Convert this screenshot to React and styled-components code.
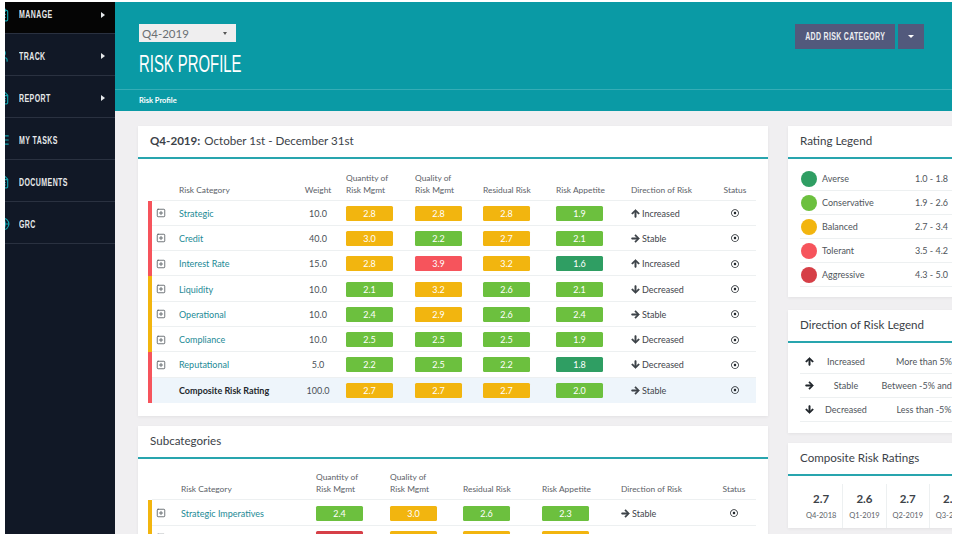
import React from 'react';
import styled, { createGlobalStyle } from 'styled-components';
import { ClipboardList, FileText, Globe, ListChecks, SquarePlus, User } from 'lucide-react';
import { FaArrowDown, FaArrowRight, FaArrowUp, FaRegDotCircle } from 'react-icons/fa';

const GlobalStyle = createGlobalStyle`
  html, body {
    margin: 0;
    background: #fff;
    font-family: Lato, "Open Sans", sans-serif;
    color: #3c4248;
  }
`;

const tones = {
  averse: '#2f9e63',
  conservative: '#6cc03e',
  balanced: '#f2b50f',
  tolerant: '#f6545c',
  aggressive: '#d63f47',
};

const toneFor = value => {
  if (value <= 1.8) return 'averse';
  if (value <= 2.6) return 'conservative';
  if (value <= 3.4) return 'balanced';
  if (value <= 4.2) return 'tolerant';
  return 'aggressive';
};

const Page = styled.div`
  width: 947px;
  height: 532px;
  margin: 2px 8px 2px 5px;
  display: flex;
  overflow: hidden;
`;

const Sidebar = styled.nav`
  width: 110px;
  flex: none;
  background: #111826;
  overflow: hidden;
`;

const NavItem = styled.div`
  height: ${p => (p.$first ? '32px' : '42px')};
  display: flex;
  align-items: center;
  border-bottom: 1px solid #2a3140;
  background: ${p => (p.$active ? '#050505' : 'transparent')};
  box-sizing: border-box;
  padding-right: 10px;
  padding-top: ${p => (p.$first ? 0 : '3px')};
  padding-bottom: ${p => (p.$first ? '6px' : 0)};
  color: #e6e8ea;
`;

const NavIcon = styled.span`
  display: flex;
  width: 14px;
  margin-left: -9px;
  margin-right: 9px;
  color: #12a0ab;
`;

const NavLabel = styled.span`
  flex: 1;
  font-family: "Liberation Sans", sans-serif;
  font-size: 10px;
  font-weight: 700;
  letter-spacing: 0.6px;
  transform: scaleX(0.7);
  transform-origin: left center;
`;

const NavCaret = styled.span`
  width: 0;
  height: 0;
  border-left: 4px solid #e6e8ea;
  border-top: 3.5px solid transparent;
  border-bottom: 3.5px solid transparent;
`;

const Content = styled.div`
  flex: 1;
  min-width: 0;
  display: flex;
  flex-direction: column;
  background: #f0eff1;
`;

const Header = styled.header`
  height: 109px;
  flex: none;
  background: #0a9aa5;
  display: flex;
  flex-direction: column;
  color: #fff;
`;

const HeaderTop = styled.div`
  height: 88px;
  flex: none;
  box-sizing: border-box;
  padding: 22px 28px 0 24px;
  display: flex;
  justify-content: space-between;
  align-items: flex-start;
  border-bottom: 1px solid #35adb6;
`;

const Select = styled.div`
  width: 97px;
  height: 18px;
  box-sizing: border-box;
  padding: 0 6px 0 3px;
  background: #efeeef;
  color: #6a6f73;
  font-size: 11.5px;
  display: flex;
  align-items: center;
  justify-content: space-between;
`;

const SelectCaret = styled.span`
  width: 0;
  height: 0;
  border-top: 3px solid #555;
  border-left: 2.5px solid transparent;
  border-right: 2.5px solid transparent;
  margin-right: 3px;
`;

const PageTitle = styled.h1`
  margin: 9px 0 0;
  font-family: "Liberation Sans", sans-serif;
  font-size: 24px;
  line-height: 26px;
  font-weight: 400;
  white-space: nowrap;
  transform: scaleX(0.62);
  transform-origin: left center;
`;

const ButtonGroup = styled.div`
  display: flex;
  gap: 3px;
`;

const ActionButton = styled.div`
  width: ${p => (p.$icon ? '26px' : '100px')};
  height: 25px;
  display: flex;
  align-items: center;
  justify-content: center;
  background: #52597c;
  color: #eceef2;
`;

const ActionLabel = styled.span`
  flex: none;
  white-space: nowrap;
  font-family: "Liberation Sans", sans-serif;
  font-size: 10px;
  font-weight: 700;
  letter-spacing: 0.45px;
  transform: scaleX(0.7);
`;

const ActionCaret = styled.span`
  width: 0;
  height: 0;
  border-top: 3px solid #fff;
  border-left: 3px solid transparent;
  border-right: 3px solid transparent;
`;

const Breadcrumb = styled.div`
  flex: 1;
  padding-left: 24px;
  display: flex;
  align-items: center;
  font-size: 7.5px;
  font-weight: 700;
`;

const Body = styled.main`
  flex: 1;
  min-height: 0;
  display: flex;
  gap: 20px;
  padding: 15px 0 0 23px;
`;

const MainColumn = styled.div`
  width: 630px;
  flex: none;
  display: flex;
  flex-direction: column;
  gap: 10px;
`;

const SideColumn = styled.div`
  width: 190px;
  flex: none;
  display: flex;
  flex-direction: column;
`;

const Card = styled.section`
  background: #fff;
  box-shadow: 0 1px 3px rgba(0, 0, 0, 0.06);
  margin-bottom: ${p => p.$gap || 0}px;
`;

const CardTitle = styled.h2`
  height: 33px;
  margin: 0;
  box-sizing: border-box;
  padding: 0 0 2px 12px;
  display: flex;
  align-items: center;
  gap: 4px;
  font-size: 11.6px;
  font-weight: 400;
  color: #3c4248;
  border-bottom: 2px solid #28a5ae;
`;

const Strong = styled.strong`
  font-weight: 700;
`;

const TableWrap = styled.div`
  padding: 11px 12px 13px 10px;
`;

const Row = styled.div`
  display: grid;
  grid-template-columns: ${p => p.$columns};
  height: ${p => (p.$head ? '30.5px' : '25.3px')};
  box-sizing: border-box;
  align-items: ${p => (p.$head ? 'end' : 'center')};
  border-left: 4px solid ${p => p.$bar || 'transparent'};
  box-shadow: ${p => (p.$total ? 'none' : 'inset 0 -1px 0 #edf0f1')};
  background: ${p => (p.$total ? '#eef5fb' : 'transparent')};
  font-size: 9px;
  color: #4a5056;
`;

const HeadCell = styled.div`
  padding-left: ${p => (p.$flush ? 0 : 6)}px;
  padding-bottom: 5px;
  font-size: 8.4px;
  line-height: 12px;
  color: #5c6268;
  text-align: ${p => p.$align || 'left'};
`;

const Expand = styled.span`
  display: flex;
  padding-left: 4px;
  color: #555b60;
`;

const CategoryLink = styled.span`
  font-size: 9px;
  color: ${p => (p.$total ? '#23282d' : '#1d8a96')};
  font-weight: ${p => (p.$total ? 700 : 400)};
`;

const Weight = styled.span`
  text-align: center;
  font-size: 9px;
`;

const BadgeCell = styled.div`
  padding-left: 6px;
`;

const Badge = styled.div`
  width: 47px;
  height: 15px;
  border-radius: 1.5px;
  background: ${p => tones[p.$tone]};
  color: #fff;
  font-size: 9px;
  line-height: 15px;
  text-align: center;
`;

const Direction = styled.div`
  padding-left: 6px;
  display: flex;
  align-items: center;
  gap: 2px;
  font-size: 9px;
  color: #3f454b;
`;

const Status = styled.div`
  display: flex;
  justify-content: center;
  color: #23282d;
`;

const LegendBody = styled.div`
  padding: ${p => p.$top}px 0 ${p => 18 - p.$top}px 12px;
`;

const LegendRow = styled.div`
  height: 24px;
  display: flex;
  align-items: center;
  box-sizing: border-box;
  border-bottom: 1px solid #edf0f1;
  font-size: 9px;
  color: #4f555b;
`;

const Dot = styled.span`
  width: 16px;
  height: 16px;
  margin-left: 1px;
  margin-right: 5px;
  border-radius: 50%;
  background: ${p => tones[p.$tone]};
`;

const LegendName = styled.span`
  width: 93px;
`;

const DirectionRow = styled(LegendRow)`
  display: grid;
  grid-template-columns: 18px 56px 100px;
  text-align: center;
`;

const DirectionArrow = styled.span`
  display: flex;
  justify-content: center;
  color: #23282d;
`;

const RatingStrip = styled.div`
  display: flex;
  padding: 8px 0 0 12px;
`;

const RatingCell = styled.div`
  width: 43.3px;
  flex: none;
  box-sizing: border-box;
  padding: 7px 0 8px;
  border-right: 1px solid #edf0f1;
  text-align: center;
`;

const RatingValue = styled.div`
  font-size: 11.5px;
  line-height: 16px;
  font-weight: 700;
  color: #3c4248;
`;

const RatingLabel = styled.div`
  margin-top: 4px;
  font-size: 7.5px;
  color: #5c6268;
`;

const navItems = [
  { label: 'MANAGE', Icon: ClipboardList, caret: true, active: true },
  { label: 'TRACK', Icon: User, caret: true },
  { label: 'REPORT', Icon: FileText, caret: true },
  { label: 'MY TASKS', Icon: ListChecks },
  { label: 'DOCUMENTS', Icon: FileText },
  { label: 'GRC', Icon: Globe },
];

const directions = {
  up: { Icon: FaArrowUp, label: 'Increased' },
  flat: { Icon: FaArrowRight, label: 'Stable' },
  down: { Icon: FaArrowDown, label: 'Decreased' },
};

const RED = tones.tolerant;
const YELLOW = tones.balanced;

const riskRows = [
  { name: 'Strategic', weight: '10.0', scores: [2.8, 2.8, 2.8, 1.9], dir: 'up', bar: RED },
  { name: 'Credit', weight: '40.0', scores: [3.0, 2.2, 2.7, 2.1], dir: 'flat', bar: RED },
  { name: 'Interest Rate', weight: '15.0', scores: [2.8, 3.9, 3.2, 1.6], dir: 'up', bar: RED },
  { name: 'Liquidity', weight: '10.0', scores: [2.1, 3.2, 2.6, 2.1], dir: 'down', bar: YELLOW },
  { name: 'Operational', weight: '10.0', scores: [2.4, 2.9, 2.6, 2.4], dir: 'flat', bar: YELLOW },
  { name: 'Compliance', weight: '10.0', scores: [2.5, 2.5, 2.5, 1.9], dir: 'down', bar: YELLOW },
  { name: 'Reputational', weight: '5.0', scores: [2.2, 2.5, 2.2, 1.8], dir: 'down', bar: RED },
  { name: 'Composite Risk Rating', weight: '100.0', scores: [2.7, 2.7, 2.7, 2.0], dir: 'flat', bar: RED, total: true },
];

const subRows = [
  { name: 'Strategic Imperatives', scores: [2.4, 3.0, 2.6, 2.3], dir: 'flat', bar: YELLOW },
  { name: 'Financial Position', scores: [4.3, 3.0, 3.0, 3.0], dir: 'flat', bar: YELLOW },
];

const ratingLegend = [
  { name: 'Averse', range: '1.0 - 1.8', tone: 'averse' },
  { name: 'Conservative', range: '1.9 - 2.6', tone: 'conservative' },
  { name: 'Balanced', range: '2.7 - 3.4', tone: 'balanced' },
  { name: 'Tolerant', range: '3.5 - 4.2', tone: 'tolerant' },
  { name: 'Aggressive', range: '4.3 - 5.0', tone: 'aggressive' },
];

const directionLegend = [
  { dir: 'up', text: 'More than 5%' },
  { dir: 'flat', text: 'Between -5% and 5%' },
  { dir: 'down', text: 'Less than -5%' },
];

const ratings = [
  { value: '2.7', label: 'Q4-2018' },
  { value: '2.6', label: 'Q1-2019' },
  { value: '2.7', label: 'Q2-2019' },
  { value: '2.7', label: 'Q3-2019' },
];

const riskColumns = '27px 117px 44px 69px 68px 73px 75px 89px 42px';
const subColumns = '29px 129px 74px 73px 79px 79px 97px 44px';

const RiskRow = ({ row, columns }) => {
  const { Icon, label } = directions[row.dir];
  return (
    <Row $columns={columns} $bar={row.bar} $total={row.total}>
      <Expand>{!row.total && <SquarePlus size={10} strokeWidth={2} />}</Expand>
      <CategoryLink $total={row.total}>{row.name}</CategoryLink>
      {row.weight && <Weight>{row.weight}</Weight>}
      {row.scores.map((score, index) => (
        <BadgeCell key={index}>
          <Badge $tone={toneFor(score)}>{score.toFixed(1)}</Badge>
        </BadgeCell>
      ))}
      <Direction>
        <Icon size={9} stroke="currentColor" strokeWidth={30} />
        {label}
      </Direction>
      <Status>
        <FaRegDotCircle size={8} />
      </Status>
    </Row>
  );
};

const TableHead = ({ columns, weight }) => (
  <Row $head $columns={columns}>
    <span />
    <HeadCell $flush>Risk Category</HeadCell>
    {weight && <HeadCell $flush $align="center">Weight</HeadCell>}
    <HeadCell>Quantity of<br />Risk Mgmt</HeadCell>
    <HeadCell>Quality of<br />Risk Mgmt</HeadCell>
    <HeadCell>Residual Risk</HeadCell>
    <HeadCell>Risk Appetite</HeadCell>
    <HeadCell>Direction of Risk</HeadCell>
    <HeadCell $flush $align="center">Status</HeadCell>
  </Row>
);

const App = () => (
  <>
    <GlobalStyle />
    <Page>
      <Sidebar>
        {navItems.map(({ label, Icon, caret, active }, index) => (
          <NavItem key={label} $active={active} $first={index === 0}>
            <NavIcon><Icon size={14} /></NavIcon>
            <NavLabel>{label}</NavLabel>
            {caret && <NavCaret />}
          </NavItem>
        ))}
      </Sidebar>
      <Content>
        <Header>
          <HeaderTop>
            <div>
              <Select>Q4-2019<SelectCaret /></Select>
              <PageTitle>RISK PROFILE</PageTitle>
            </div>
            <ButtonGroup>
              <ActionButton><ActionLabel>ADD RISK CATEGORY</ActionLabel></ActionButton>
              <ActionButton $icon><ActionCaret /></ActionButton>
            </ButtonGroup>
          </HeaderTop>
          <Breadcrumb>Risk Profile</Breadcrumb>
        </Header>
        <Body>
          <MainColumn>
            <Card>
              <CardTitle>
                <Strong>Q4-2019:</Strong> October 1st - December 31st
              </CardTitle>
              <TableWrap>
                <TableHead columns={riskColumns} weight />
                {riskRows.map(row => (
                  <RiskRow key={row.name} row={row} columns={riskColumns} />
                ))}
              </TableWrap>
            </Card>
            <Card>
              <CardTitle>Subcategories</CardTitle>
              <TableWrap>
                <TableHead columns={subColumns} />
                {subRows.map(row => (
                  <RiskRow key={row.name} row={row} columns={subColumns} />
                ))}
              </TableWrap>
            </Card>
          </MainColumn>
          <SideColumn>
            <Card $gap={13}>
              <CardTitle>Rating Legend</CardTitle>
              <LegendBody $top={8}>
                {ratingLegend.map(item => (
                  <LegendRow key={item.name}>
                    <Dot $tone={item.tone} />
                    <LegendName>{item.name}</LegendName>
                    <span>{item.range}</span>
                  </LegendRow>
                ))}
              </LegendBody>
            </Card>
            <Card $gap={10}>
              <CardTitle>Direction of Risk Legend</CardTitle>
              <LegendBody $top={7}>
                {directionLegend.map(({ dir, text }) => {
                  const { Icon, label } = directions[dir];
                  return (
                    <DirectionRow key={dir}>
                      <DirectionArrow><Icon size={9} stroke="currentColor" strokeWidth={30} /></DirectionArrow>
                      <span>{label}</span>
                      <span>{text}</span>
                    </DirectionRow>
                  );
                })}
              </LegendBody>
            </Card>
            <Card>
              <CardTitle>Composite Risk Ratings</CardTitle>
              <RatingStrip>
                {ratings.map(item => (
                  <RatingCell key={item.label}>
                    <RatingValue>{item.value}</RatingValue>
                    <RatingLabel>{item.label}</RatingLabel>
                  </RatingCell>
                ))}
              </RatingStrip>
            </Card>
          </SideColumn>
        </Body>
      </Content>
    </Page>
  </>
);

export default App;
